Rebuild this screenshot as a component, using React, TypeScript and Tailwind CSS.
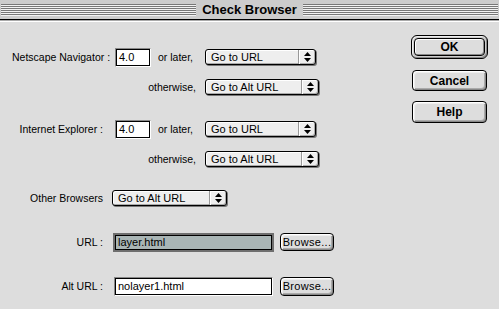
import React from "react";

const label = "font-['Liberation_Sans',Arial,sans-serif] text-[10.5px] text-black leading-none";

function Arrows() {
  return (
    <svg width="7" height="10" viewBox="0 0 7 10" className="block">
      <path d="M3.5 0 L7 4 L0 4 Z" fill="#000" />
      <path d="M0 6 L7 6 L3.5 10 Z" fill="#000" />
    </svg>
  );
}

function Popup({ text, w }: { text: string; w: string }) {
  return (
    <div
      className={`${w} h-[16px] flex rounded-[3px] border border-black bg-[#eeeeee] shadow-[1px_1px_0_#777,inset_1px_1px_0_#fff,inset_-1px_-1px_0_#aaa]`}
    >
      <div className={`${label} flex-1 flex items-center pl-[5px] text-[11px]`}>{text}</div>
      <div className="w-[17px] flex items-center justify-center border-l border-[#999] shadow-[inset_1px_0_0_#fff]">
        <Arrows />
      </div>
    </div>
  );
}

function TextBox({ value, w, focus }: { value: string; w: string; focus?: boolean }) {
  if (focus) {
    return (
      <div className={`${w} h-[19px] border-2 border-[#6e6e6e] bg-[#6e6e6e]`}>
        <div className={`${label} h-full border border-black bg-[#a9b5b5] flex items-center pl-[2px] text-[11px]`}>
          {value}
        </div>
      </div>
    );
  }
  return (
    <div className={`${w} h-[19px] border border-t-[#888] border-l-[#888] border-b-white border-r-white`}>
      <div className={`${label} h-full border border-black bg-white flex items-center pl-[2px] text-[11px]`}>
        {value}
      </div>
    </div>
  );
}

function Btn({ text, w, h, small }: { text: string; w: string; h: string; small?: boolean }) {
  return (
    <div
      className={`${w} ${h} flex items-center justify-center rounded-[4px] border border-black bg-[#dddddd] shadow-[inset_1px_1px_0_#fff,inset_2px_2px_0_#eee,inset_-1px_-1px_0_#888,inset_-2px_-2px_0_#aaa] ${
        small
          ? "font-['Liberation_Sans',Arial,sans-serif] text-[11px] tracking-[0.3px]"
          : "font-['Liberation_Sans',Arial,sans-serif] text-[12px] font-bold"
      } text-black leading-none`}
    >
      {text}
    </div>
  );
}

export default function App() {
  return (
    <div className="w-[499px] h-[309px] bg-[#dddddd] overflow-hidden flex flex-col">
      {/* title bar */}
      <div className="h-[20px] bg-[#cccccc] border-b border-black flex items-center px-[1px]">
        <div className="flex-1 h-[12px] bg-[repeating-linear-gradient(to_bottom,#777_0px,#777_1px,#f2f2f2_1px,#f2f2f2_2px)]" />
        <div className="px-[6px] font-['Liberation_Sans',Arial,sans-serif] text-[13px] font-bold leading-none text-black">
          Check Browser
        </div>
        <div className="flex-1 h-[12px] bg-[repeating-linear-gradient(to_bottom,#777_0px,#777_1px,#f2f2f2_1px,#f2f2f2_2px)]" />
      </div>
      <div className="h-[1px] bg-[#aaaaaa]" />
      <div className="h-[1px] bg-white" />

      <div className="flex flex-1">
        {/* form */}
        <div className="w-[400px] flex flex-col">
          <div className="mt-[25px] h-[20px] flex items-center">
            <div className="w-[196px] flex items-center">
              <div className={`${label} w-[103px] pl-[12px] whitespace-nowrap`}>Netscape Navigator :</div>
              <div className="ml-[12px]">
                <TextBox value="4.0" w="w-[36px]" />
              </div>
              <div className={`${label} ml-[7px]`}>or later,</div>
            </div>
            <div className="ml-[9px]">
              <Popup text="Go to URL" w="w-[111px]" />
            </div>
          </div>

          <div className="mt-[10px] h-[20px] flex items-center">
            <div className={`${label} w-[196px] text-right`}>otherwise,</div>
            <div className="ml-[9px]">
              <Popup text="Go to Alt URL" w="w-[114px]" />
            </div>
          </div>

          <div className="mt-[22px] h-[20px] flex items-center">
            <div className="w-[196px] flex items-center">
              <div className={`${label} w-[103px] text-right whitespace-nowrap`}>Internet Explorer :</div>
              <div className="ml-[12px]">
                <TextBox value="4.0" w="w-[36px]" />
              </div>
              <div className={`${label} ml-[7px]`}>or later,</div>
            </div>
            <div className="ml-[9px]">
              <Popup text="Go to URL" w="w-[111px]" />
            </div>
          </div>

          <div className="mt-[10px] h-[20px] flex items-center">
            <div className={`${label} w-[196px] text-right`}>otherwise,</div>
            <div className="ml-[9px]">
              <Popup text="Go to Alt URL" w="w-[114px]" />
            </div>
          </div>

          <div className="mt-[19px] h-[20px] flex items-center">
            <div className={`${label} w-[103px] text-right`}>Other Browsers</div>
            <div className="ml-[9px]">
              <Popup text="Go to Alt URL" w="w-[115px]" />
            </div>
          </div>

          <div className="mt-[24px] h-[20px] flex items-center">
            <div className={`${label} w-[103px] text-right`}>URL :</div>
            <div className="ml-[10px]">
              <TextBox value="layer.html" w="w-[161px]" focus />
            </div>
            <div className="ml-[6px]">
              <Btn text="Browse..." w="w-[54px]" h="h-[18px]" small />
            </div>
          </div>

          <div className="mt-[24px] h-[20px] flex items-center">
            <div className={`${label} w-[103px] text-right`}>Alt URL :</div>
            <div className="ml-[11px]">
              <TextBox value="nolayer1.html" w="w-[159px]" />
            </div>
            <div className="ml-[7px]">
              <Btn text="Browse..." w="w-[54px]" h="h-[19px]" small />
            </div>
          </div>
        </div>

        {/* buttons */}
        <div className="flex flex-col pl-[11px] pt-[13px]">
          <div className="w-[77px] h-[24px] rounded-[6px] border border-black bg-[#cccccc] p-[2px] shadow-[inset_1px_1px_0_#eee,inset_-1px_-1px_0_#888]">
            <div className="w-full h-full rounded-[4px] border border-black bg-[#dddddd] flex items-center justify-center shadow-[inset_1px_1px_0_#fff,inset_-1px_-1px_0_#888] font-['Liberation_Sans',Arial,sans-serif] text-[12px] font-bold leading-none text-black">
              OK
            </div>
          </div>
          <div className="mt-[11px] ml-[1px]">
            <Btn text="Cancel" w="w-[75px]" h="h-[21px]" />
          </div>
          <div className="mt-[10px] ml-[1px]">
            <Btn text="Help" w="w-[75px]" h="h-[22px]" />
          </div>
        </div>
      </div>
    </div>
  );
}
